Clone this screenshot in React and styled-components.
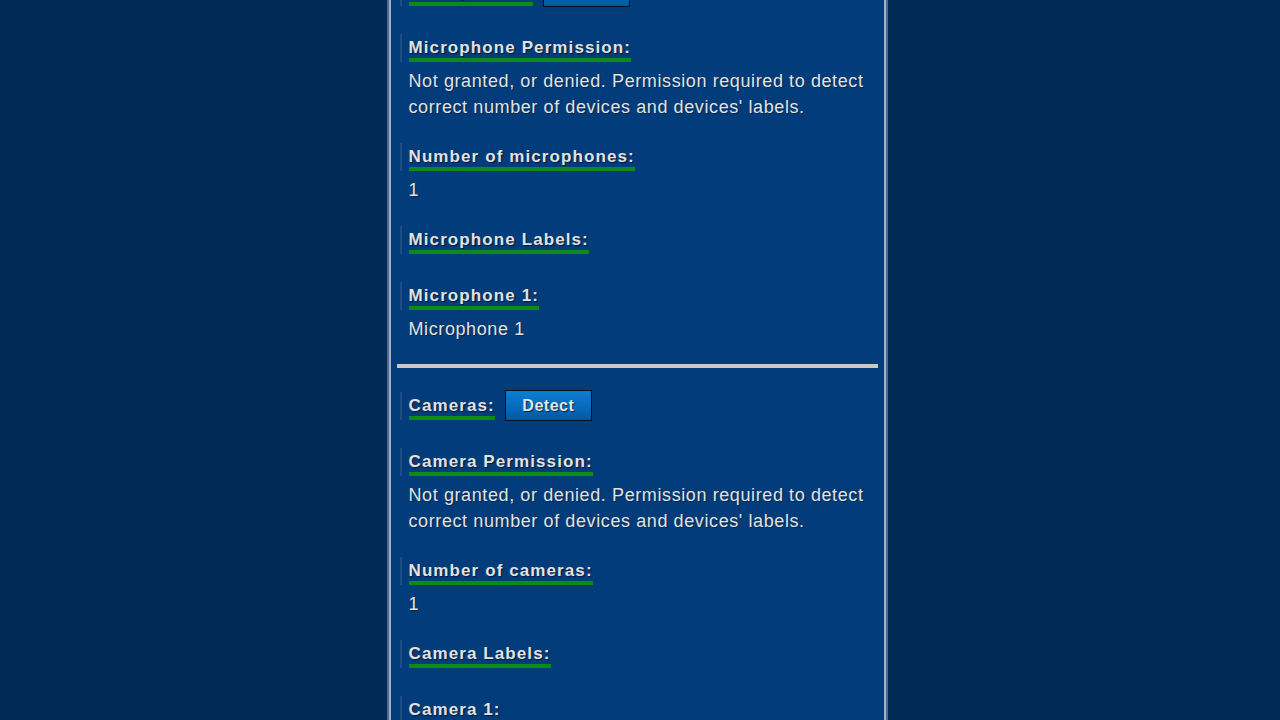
import React from "react";
import styled, { createGlobalStyle } from "styled-components";

const Global = createGlobalStyle`
  html, body { margin: 0; padding: 0; background: #012a56; overflow: hidden; }
  body { font-family: "Liberation Sans", Arial, sans-serif; color: #e4e4e4; }
  *, *::before, *::after { box-sizing: border-box; }
`;

const Page = styled.div`
  height: 720px;
  overflow: hidden;
  display: flex;
  justify-content: center;
  padding-right: 6px;
`;

const Panel = styled.main`
  width: 497px;
  flex-shrink: 0;
  margin-top: -24px;
  background: #023c7a;
  border-left: 2px solid #a3b0c2;
  border-right: 2px solid #a3b0c2;
  box-shadow: -2px 0 0 #4f6b8d, 2px 0 0 #4f6b8d;
  padding: 0 9px;
  min-height: 900px;
`;

const Field = styled.section`
  margin-bottom: ${(p) => (p.$detect ? "27px" : p.$empty ? "28px" : "23px")};
`;

const Row = styled.div`
  display: flex;
  align-items: center;
  gap: 10px;
`;

const Marker = styled.div`
  border-left: 2px solid #1d4d84;
  padding: 4px 0 0 7px;
  height: 28px;
`;

const Label = styled.span`
  display: inline-block;
  font-size: 17px;
  line-height: 20px;
  font-weight: bold;
  letter-spacing: 1.1px;
  color: #e2e2e2;
  text-shadow: 1px 1px 1px rgba(0, 0, 0, 0.55);
  border-bottom: 4px solid #0b8c18;
`;

const Value = styled.div`
  margin-top: 6px;
  padding-left: 9px;
  font-size: 18px;
  line-height: 26px;
  letter-spacing: 0.6px;
  color: #e2e2e2;
  text-shadow: 1px 1px 1px rgba(0, 0, 0, 0.35);
`;

const Button = styled.button`
  width: 87px;
  height: 31px;
  border: 1px solid #04101c;
  background: linear-gradient(#0c7dd4, #0569ba 60%, #00589f);
  color: #e4e4e4;
  font-family: "Liberation Sans", Arial, sans-serif;
  font-size: 16px;
  font-weight: bold;
  letter-spacing: 0.5px;
  text-shadow: 1px 1px 1px rgba(0, 0, 0, 0.6);
  padding: 0;
  cursor: pointer;
`;

const Separator = styled.hr`
  border: none;
  height: 4px;
  background: #c8c8c8;
  margin: -1px -3px 22px;
`;

function Heading({ label, detect }) {
  return (
    <Row>
      <Marker>
        <Label>{label}</Label>
      </Marker>
      {detect && <Button>Detect</Button>}
    </Row>
  );
}

function Item({ label, value, detect }) {
  return (
    <Field $empty={!value} $detect={detect}>
      <Heading label={label} detect={detect} />
      {value && <Value>{value}</Value>}
    </Field>
  );
}

const PERM =
  "Not granted, or denied. Permission required to detect correct number of devices and devices' labels.";

export default function App() {
  return (
    <>
      <Global />
      <Page>
        <Panel>
          <Item label="Microphones:" detect />
          <Item label="Microphone Permission:" value={PERM} />
          <Item label="Number of microphones:" value="1" />
          <Item label="Microphone Labels:" />
          <Item label="Microphone 1:" value="Microphone 1" />
          <Separator />
          <Item label="Cameras:" detect />
          <Item label="Camera Permission:" value={PERM} />
          <Item label="Number of cameras:" value="1" />
          <Item label="Camera Labels:" />
          <Item label="Camera 1:" value="Camera 1" />
        </Panel>
      </Page>
    </>
  );
}
